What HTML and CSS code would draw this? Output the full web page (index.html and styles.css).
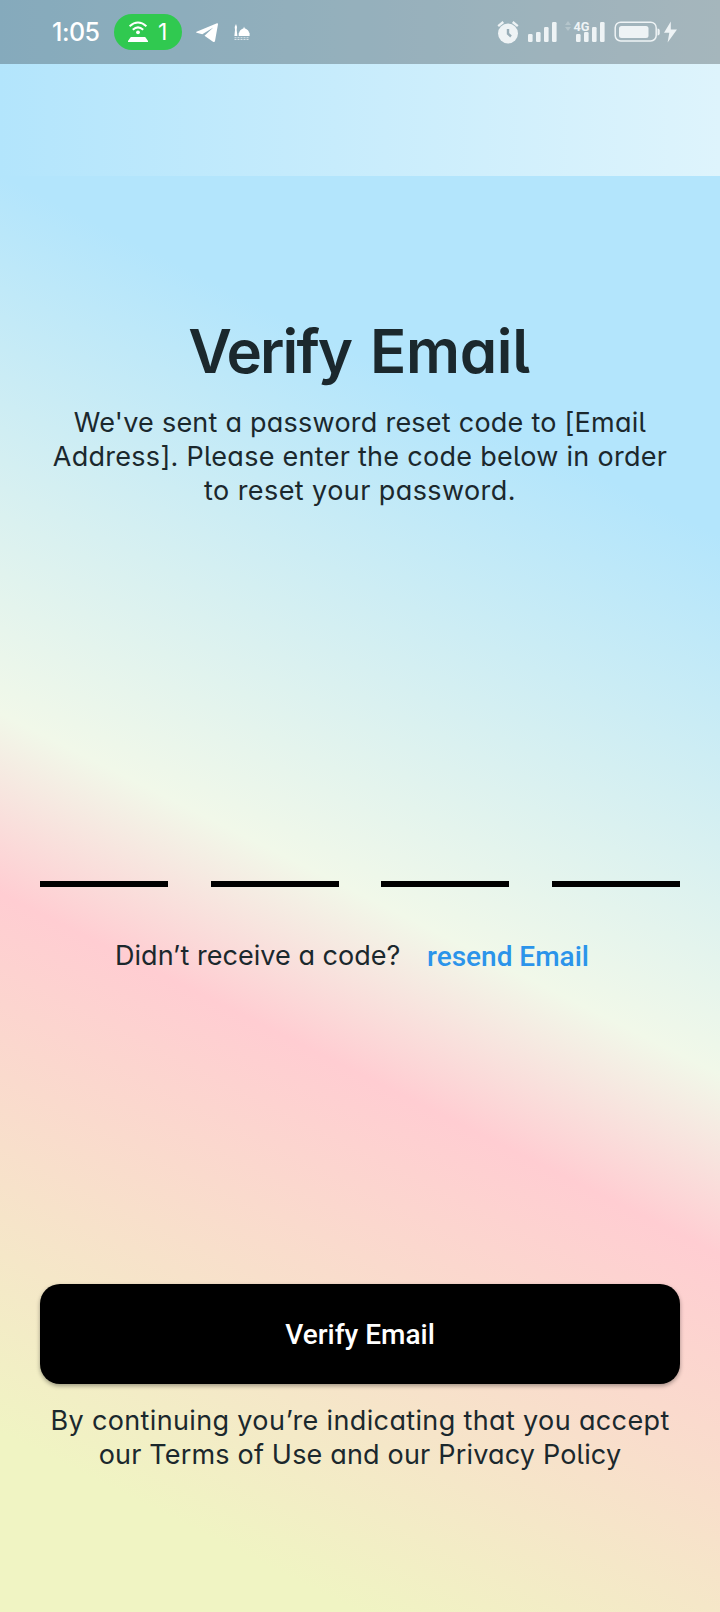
FILE: index.html
```html
<!DOCTYPE html>
<html lang="en">
<head>
<meta charset="utf-8">
<title>Verify Email</title>
<link rel="stylesheet" href="styles.css">
</head>
<body>
<div class="screen">
  <header class="app-bar">
    <div class="status-bar">
      <span class="clock">1:05</span>
      <span class="hotspot">
        <svg class="hotspot-icon" width="20" height="22" viewBox="0 0 20 22">
          <path d="M1.6 5.2Q10-2.2 18.4 5.2M4.8 8.8Q10 4 15.2 8.8" fill="none" stroke="#fff" stroke-width="2"/>
          <circle cx="10" cy="11.3" r="1.9" fill="#fff"/>
          <path d="M2.8 16H17.2L20 20V21H0V20Z" fill="#fff"/>
        </svg>
        <span class="hotspot-count">1</span>
      </span>
      <svg class="telegram" width="22" height="20" viewBox="0 0 22 20">
        <path d="M0.5 8.8L21 .3Q22.2 0 22 1.3L19 18Q18.6 19.8 17 18.7L8.5 12.7L17.3 4.4L6.3 11.3L.6 9.7Q-.3 9.3.5 8.8Z" fill="#fff"/>
      </svg>
      <svg class="mosque" width="16" height="17" viewBox="0 0 16 17">
        <path d="M2 0L3 3L2.7 6L3.4 12H.4L1 6L.7 3Z" fill="#fff"/>
        <path d="M10 2.5L10.7 4.2Q15 6.2 15 8.5L15.6 9V12H4.7V9L5.3 8.5Q5.3 6.2 9.5 4.2Z" fill="#fff"/>
        <path d="M.5 13.7H15.5M.5 15.5H15.5" fill="none" stroke="#fff" stroke-opacity=".65" stroke-width="1" stroke-dasharray="2 1"/>
      </svg>
      <svg class="system-icons" width="184" height="32" viewBox="0 -8 184 32">
        <g fill="#eef3f5">
          <circle cx="11" cy="12.5" r="10"/>
          <path d="M1.2 5.2L6.3 1M20.8 5.2L15.7 1" fill="none" stroke="#eef3f5" stroke-width="2.3"/>
          <path d="M11 8V12.7L14 15.5" fill="none" stroke="#98adb7" stroke-width="2.4"/>
          <rect x="31" y="13" width="4.6" height="8" rx="1.2"/>
          <rect x="39" y="11" width="4.6" height="10" rx="1.2"/>
          <rect x="47" y="6" width="4.6" height="15" rx="1.2"/>
          <rect x="55" y="1" width="4.6" height="20" rx="1.2"/>
          <path d="M71 0L74 4H68ZM71 10L68 6H74Z" fill-opacity=".28"/>
          <rect x="79" y="13" width="4.6" height="8" rx="1.2"/>
          <rect x="87" y="11" width="4.6" height="10" rx="1.2"/>
          <rect x="95" y="6" width="4.6" height="15" rx="1.2"/>
          <rect x="103" y="1" width="4.6" height="20" rx="1.2"/>
          <text class="network" x="76.5" y="10" textLength="16" lengthAdjust="spacingAndGlyphs">4G</text>
          <rect x="118.2" y="1.2" width="41" height="18.8" rx="5.5" fill="none" stroke="#eef3f5" stroke-width="1.5"/>
          <rect x="122" y="5" width="29.5" height="12" rx="2.5"/>
          <path d="M160.5 7.5Q162.7 7.5 162.7 9.5V12.5Q162.7 14.5 160.5 14.5Z"/>
          <path d="M173.8.5L167 11.8H172.3L170.6 21.5L180 8.5H173.8Z"/>
        </g>
      </svg>
    </div>
  </header>

  <main class="body">
    <h1 class="title"><span class="title-verb">Verify</span> <span class="title-noun">Email</span></h1>
    <p class="copy intro">
      <span class="line intro-a">We've sent a password reset code to [Email</span>
      <span class="line intro-b">Address]. Please enter the code below in order</span>
      <span class="line intro-c">to reset your password.</span>
    </p>
    <div class="code">
      <span class="digit"></span><span class="digit"></span><span class="digit"></span><span class="digit"></span>
    </div>
    <div class="resend">
      <span class="copy question">Didn’t receive a code?</span>
      <a class="resend-link">resend Email</a>
    </div>
    <button class="verify">Verify Email</button>
    <p class="copy terms">
      <span class="line terms-a">By continuing you’re indicating that you accept</span>
      <span class="line terms-b">our Terms of Use and our Privacy Policy</span>
    </p>
  </main>
</div>
</body>
</html>
```
FILE: styles.css
```css
* { box-sizing: border-box; }
body { margin: 0; }

.screen {
  width: 720px;
  height: 1612px;
  display: flex;
  flex-direction: column;
  overflow: hidden;
  color: #1b282d;
}

.app-bar {
  height: 176px;
  flex: none;
  background: linear-gradient(90deg, #b3e5fc, #def4fc);
}

.status-bar {
  height: 64px;
  display: flex;
  align-items: flex-start;
  padding-left: 52px;
  background: rgba(0, 0, 0, .255);
  color: #fff;
}

.clock {
  width: 62px;
  margin-top: 18px;
  font: 500 25px/29px Inter, sans-serif;
  letter-spacing: -.5px;
  white-space: nowrap;
}

.hotspot {
  display: flex;
  width: 68px;
  height: 36px;
  margin-top: 14px;
  padding-left: 14px;
  border-radius: 18px;
  background: #30c950;
}
.hotspot-icon { margin-top: 7px; }
.hotspot-count {
  margin: 4px 0 0 10px;
  font: 400 23px/29px Inter, sans-serif;
}
.telegram { margin: 23px 0 0 14px; }
.mosque { margin: 24px 0 0 16px; }
.system-icons { margin: 13px 0 0 247px; }
.network { font: 700 13.5px Roboto, sans-serif; }

.body {
  flex: 1;
  display: flex;
  flex-direction: column;
  align-items: center;
  padding: 135px 40px 0;
  background: linear-gradient(206.63deg, #b3e5fc 20%, #f1f8e9 50%, #ffcdd2 60%, #f0f4c3 90%);
}

.title {
  margin: 0 2px 0 0;
  font: 600 60px/80px Inter, sans-serif;
  font-feature-settings: "cv11", "cv05";
  word-spacing: 3.5px;
  white-space: nowrap;
}
.title-verb { letter-spacing: -1.9px; }
.title-noun { letter-spacing: -.3px; }

.copy {
  margin: 0;
  font: 400 27px/34px Inter, sans-serif;
  font-feature-settings: "cv11", "cv05";
  text-align: center;
  white-space: nowrap;
}
.line { display: block; }
.intro { margin-top: 15px; }
.intro-a { letter-spacing: .24px; }
.intro-b { letter-spacing: .28px; }
.intro-c { letter-spacing: .42px; }

.code {
  display: flex;
  justify-content: space-between;
  width: 640px;
  margin-top: 373px;
}
.digit {
  width: 128px;
  height: 6px;
  background: #000;
}

.resend {
  display: flex;
  align-self: flex-start;
  height: 34px;
  margin: 52px 0 0 75px;
}
.question {
  width: 312px;
  text-align: left;
  letter-spacing: .03px;
}
.resend-link {
  color: #2b94ea;
  font: 500 28px/35px Roboto, sans-serif;
  white-space: nowrap;
}

.verify {
  width: 640px;
  height: 100px;
  margin-top: 311px;
  padding: 1px 0 0;
  border: 0;
  border-radius: 20px;
  background: #000;
  box-shadow: 0 2px 4px rgba(0, 0, 0, .35);
  color: #fff;
  font: 500 28px/34px Roboto, sans-serif;
}
.terms { margin-top: 20px; }
.terms-a { letter-spacing: .36px; }
.terms-b { letter-spacing: .18px; }
```
